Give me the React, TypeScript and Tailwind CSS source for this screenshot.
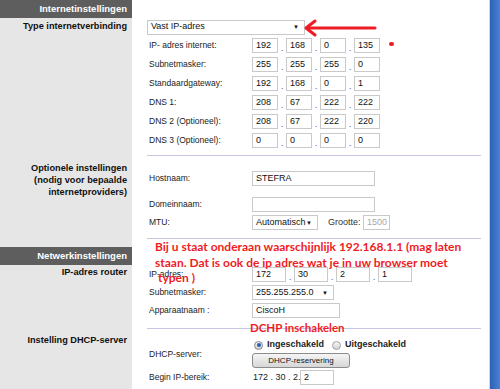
const ipInternet = [
  { label: "IP- adres internet:", values: ["192", "168", "0", "135"] },
  { label: "Subnetmasker:", values: ["255", "255", "255", "0"] },
  { label: "Standaardgateway:", values: ["192", "168", "0", "1"] },
  { label: "DNS 1:", values: ["208", "67", "222", "222"] },
  { label: "DNS 2 (Optioneel):", values: ["208", "67", "222", "220"] },
  { label: "DNS 3 (Optioneel):", values: ["0", "0", "0", "0"] },
];

function Box({ value, w, muted }: { value: string; w: string; muted?: boolean }) {
  return (
    <div
      className={`${w} h-[15px] shrink-0 border border-[#c9c9c9] bg-white pl-[3px] text-[9px] leading-[13px] ${
        muted ? "text-[#a8a8a8]" : "text-[#111]"
      }`}
    >
      {value}
    </div>
  );
}

function Select({ value, w }: { value: string; w: string }) {
  return (
    <div
      className={`${w} h-[15px] shrink-0 border border-[#c9c9c9] bg-white flex items-center justify-between pl-[3px] pr-[5px] text-[9px] text-[#111]`}
    >
      <span>{value}</span>
      <span className="text-[6px] leading-none">▼</span>
    </div>
  );
}

function Ip({ values, w }: { values: string[]; w: string }) {
  return (
    <div className="flex items-end">
      {values.map((v, i) => (
        <div key={i} className="flex items-end">
          {i > 0 && <span className="w-[8px] text-center text-[8px] leading-[9px]">.</span>}
          <Box value={v} w={w} />
        </div>
      ))}
    </div>
  );
}

function Label({ children }: { children: React.ReactNode }) {
  return <div className="w-[105px] shrink-0 pl-[2px] text-[8.5px] text-[#222]">{children}</div>;
}

function LeftHeader({ children }: { children: React.ReactNode }) {
  return (
    <div className="h-[18px] bg-[#5e5e5e] flex items-center justify-end pr-[5px] text-[9.5px] font-bold text-white">
      {children}
    </div>
  );
}

const leftText = "pr-[5px] text-right text-[9.2px] leading-[12px] font-bold text-[#111]";

export default function App() {
  return (
    <div
      className="relative w-[500px] h-[389px] overflow-hidden bg-white flex"
      style={{ fontFamily: '"Liberation Sans", Arial, sans-serif' }}
    >
      <div className="flex-1 flex flex-col">
        {/* Internetinstellingen */}
        <div className="flex">
          <div className="w-[132px] shrink-0 bg-[#e6e6e6]">
            <LeftHeader>Internetinstellingen</LeftHeader>
            <div className={`pt-[2px] ${leftText}`}>Type internetverbinding</div>
          </div>
          <div className="flex-1 pl-[15px] pr-[8px] pt-[18px] flex flex-col">
            <div className="h-[18px] flex items-center">
              <Select value="Vast IP-adres" w="w-[158px]" />
            </div>
            {ipInternet.map((row) => (
              <div key={row.label} className="h-[19px] flex items-center">
                <Label>{row.label}</Label>
                <Ip values={row.values} w="w-[26px]" />
              </div>
            ))}
            <div className="mt-[5px] h-px bg-[#c6c6e4]" />
          </div>
        </div>

        {/* Optionele instellingen */}
        <div className="flex">
          <div className={`w-[132px] shrink-0 bg-[#e6e6e6] pt-[6px] ${leftText}`}>
            Optionele instellingen
            <br />
            (nodig voor bepaalde
            <br />
            internetproviders)
          </div>
          <div className="flex-1 pl-[15px] pr-[8px] pt-[14px] flex flex-col">
            <div className="h-[17px] flex items-center">
              <Label>Hostnaam:</Label>
              <Box value="STEFRA" w="w-[123px]" />
            </div>
            <div className="mt-[9px] h-[17px] flex items-center">
              <Label>Domeinnaam:</Label>
              <Box value="" w="w-[123px]" />
            </div>
            <div className="mt-[1px] h-[17px] flex items-center">
              <Label>MTU:</Label>
              <Select value="Automatisch" w="w-[66px]" />
              <span className="ml-[10px] w-[35px] text-[9px] text-[#333]">Grootte:</span>
              <Box value="1500" w="w-[27px]" muted />
            </div>
            <div className="mt-[7px] h-px bg-[#c6c6e4]" />
          </div>
        </div>

        {/* Netwerkinstellingen */}
        <div className="flex">
          <div className="w-[132px] shrink-0 bg-[#e6e6e6] pt-[8px]">
            <LeftHeader>Netwerkinstellingen</LeftHeader>
            <div className={`pt-[1px] ${leftText}`}>IP-adres router</div>
          </div>
          <div className="flex-1 pl-[15px] pr-[8px] pt-[27px] flex flex-col">
            <div className="h-[17px] flex items-center">
              <Label>IP-adres:</Label>
              <Ip values={["172", "30", "2", "1"]} w="w-[34px]" />
            </div>
            <div className="mt-[1px] h-[17px] flex items-center">
              <Label>Subnetmasker:</Label>
              <Select value="255.255.255.0" w="w-[82px]" />
            </div>
            <div className="mt-[1px] h-[17px] flex items-center">
              <Label>Apparaatnaam :</Label>
              <Box value="CiscoH" w="w-[88px]" />
            </div>
            <div className="mt-[9px] h-px bg-[#c6c6e4]" />
          </div>
        </div>

        {/* DHCP */}
        <div className="flex flex-1">
          <div className={`w-[132px] shrink-0 bg-[#e6e6e6] pt-[5px] ${leftText}`}>
            Instelling DHCP-server
          </div>
          <div className="flex-1 pl-[15px] pr-[8px] pt-[9px] flex flex-col">
            <div className="flex">
              <div className="w-[105px] shrink-0 flex items-center pl-[2px] text-[8.5px] text-[#222] pt-[2px]">
                DHCP-server:
              </div>
              <div className="flex flex-col">
                <div className="h-[14px] flex items-center text-[9px] font-bold text-[#222]">
                  <span className="w-[9px] h-[9px] rounded-full border border-[#8a8a8a] bg-gradient-to-b from-[#f4f4f4] to-[#cfcfcf] flex items-center justify-center ml-[2px] mr-[4px]">
                    <span className="w-[4px] h-[4px] rounded-full bg-[#2a5fb0]" />
                  </span>
                  Ingeschakeld
                  <span className="w-[9px] h-[9px] rounded-full border border-[#a0a0a0] bg-gradient-to-b from-[#f6f6f6] to-[#d4d4d4] ml-[8px] mr-[4px]" />
                  Uitgeschakeld
                </div>
                <div className="mt-[1px] w-[98px] h-[15px] rounded-[3px] border border-[#8c8c8c] bg-gradient-to-b from-[#f6f6f6] to-[#d6d6d6] flex items-center justify-center text-[8px] text-[#111]">
                  DHCP-reservering
                </div>
              </div>
            </div>
            <div className="mt-[1px] h-[17px] flex items-center">
              <Label>Begin IP-bereik:</Label>
              <span className="w-[48px] shrink-0 whitespace-nowrap pl-[1px] text-[9px] text-[#222]">172 . 30 . 2.</span>
              <Box value="2" w="w-[34px]" />
            </div>
          </div>
        </div>
      </div>

      {/* blue window edge */}
      <div className="w-[11px] shrink-0 border-l border-[#d0d6e0] bg-gradient-to-r from-[#2c62b6] to-[#4a80d2]" />

      {/* red annotations */}
      <svg className="absolute left-[300px] top-[18px]" width="80" height="20" viewBox="0 0 80 20">
        <path d="M8 10 H75" stroke="#ee1c24" strokeWidth="3" strokeLinecap="round" />
        <path d="M15 3 L6 10 L15 17" stroke="#ee1c24" strokeWidth="3" fill="none" strokeLinecap="round" strokeLinejoin="round" />
      </svg>
      <div className="absolute left-[389px] top-[42px] w-[5px] h-[4px] rounded-full bg-[#ee1c24]" />
      <div
        className="absolute left-[155px] top-[239px] text-[12px] leading-[15.5px] font-bold text-[#f01c24]"
        style={{ fontFamily: "Lato, sans-serif" }}
      >
        Bij u staat onderaan waarschijnlijk 192.168.1.1 (mag laten
        <br />
        staan. Dat is ook de ip adres wat je in uw browser moet
        <br />
        <span className="ml-[3px]">typen )</span>
      </div>
      <div
        className="absolute left-[250px] top-[320px] text-[11.5px] leading-[15px] font-bold text-[#f01c24]"
        style={{ fontFamily: "Lato, sans-serif" }}
      >
        DCHP inschakelen
      </div>
    </div>
  );
}
